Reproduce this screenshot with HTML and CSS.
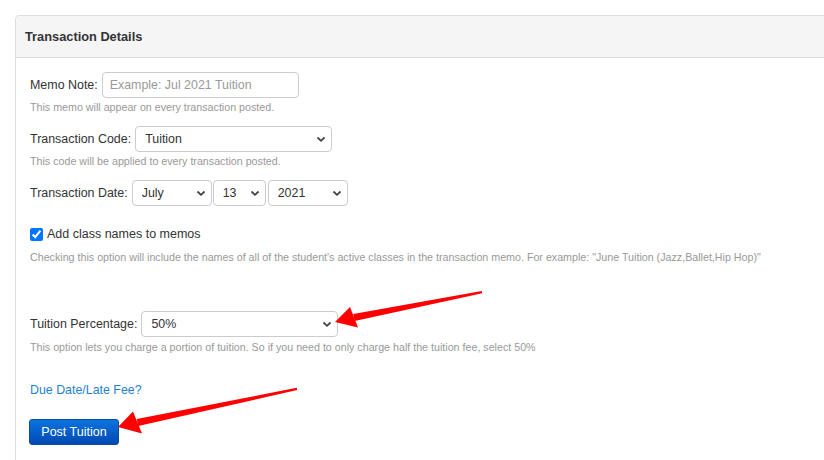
FILE: index.html
```html
<!DOCTYPE html>
<html>
<head>
<meta charset="utf-8">
<link rel="stylesheet" href="styles.css">
</head>
<body>
<div class="panel">
  <div class="panel-heading">Transaction Details</div>
  <div class="panel-body">
    <div class="group">
      <div class="row">
        <label class="label">Memo Note:</label>
        <input class="control input" type="text" placeholder="Example: Jul 2021 Tuition">
      </div>
      <div class="help">This memo will appear on every transaction posted.</div>
    </div>
    <div class="group">
      <div class="row">
        <label class="label">Transaction Code:</label>
        <span class="select w197">
          <select class="control"><option>Tuition</option></select>
          <svg class="chev" width="10" height="7" viewBox="0 0 10 7"><path d="M1.5 1.5 L5 4.8 L8.5 1.5" fill="none" stroke="#444" stroke-width="1.8"/></svg>
        </span>
      </div>
      <div class="help">This code will be applied to every transaction posted.</div>
    </div>
    <div class="group date-group">
      <div class="row">
        <label class="label">Transaction Date:</label>
        <span class="dates">
          <span class="select w80">
            <select class="control"><option>July</option></select>
            <svg class="chev" width="10" height="7" viewBox="0 0 10 7"><path d="M1.5 1.5 L5 4.8 L8.5 1.5" fill="none" stroke="#444" stroke-width="1.8"/></svg>
          </span>
          <span class="select w53">
            <select class="control"><option>13</option></select>
            <svg class="chev" width="10" height="7" viewBox="0 0 10 7"><path d="M1.5 1.5 L5 4.8 L8.5 1.5" fill="none" stroke="#444" stroke-width="1.8"/></svg>
          </span>
          <span class="select w80 gap2">
            <select class="control"><option>2021</option></select>
            <svg class="chev" width="10" height="7" viewBox="0 0 10 7"><path d="M1.5 1.5 L5 4.8 L8.5 1.5" fill="none" stroke="#444" stroke-width="1.8"/></svg>
          </span>
        </span>
      </div>
    </div>
    <div class="group check-group">
      <label class="check-row">
        <input class="checkbox" type="checkbox" checked>
        <span>Add class names to memos</span>
      </label>
      <div class="help check-help">Checking this option will include the names of all of the student's active classes in the transaction memo. For example: "June Tuition (Jazz,Ballet,Hip Hop)"</div>
    </div>
    <div class="group pct-group">
      <div class="row">
        <label class="label">Tuition Percentage:</label>
        <span class="select w197">
          <select class="control"><option>50%</option></select>
          <svg class="chev" width="10" height="7" viewBox="0 0 10 7"><path d="M1.5 1.5 L5 4.8 L8.5 1.5" fill="none" stroke="#444" stroke-width="1.8"/></svg>
        </span>
      </div>
      <div class="help pct-help">This option lets you charge a portion of tuition. So if you need to only charge half the tuition fee, select 50%</div>
    </div>
    <a class="link" href="#">Due Date/Late Fee?</a>
    <div class="actions">
      <button class="btn" type="button">Post Tuition</button>
    </div>
  </div>
</div>
<svg class="arrows" width="824" height="460" viewBox="0 0 824 460">
  <defs>
    <filter id="soft" x="-10%" y="-10%" width="120%" height="120%">
      <feGaussianBlur stdDeviation="0.7"/>
    </filter>
  </defs>
  <g fill="#ff0000" filter="url(#soft)">
    <polygon points="481.8,291 482.2,293.2 354.7,320.9 353.3,314.1"/>
    <polygon points="335,322 350,307 358,327.5"/>
    <polygon points="296.8,387.8 297.2,390 138.2,425.9 136.8,419.1"/>
    <polygon points="118,427 133,411.5 142,433.5"/>
  </g>
</svg>
</body>
</html>
```
FILE: styles.css
```css
html, body {
  margin: 0;
  padding: 0;
  overflow: hidden;
  background: #fff;
}
body {
  font-family: "Liberation Sans", Arial, sans-serif;
  color: #333;
  position: relative;
  width: 824px;
  height: 460px;
}
.panel {
  margin: 15px 0 0 15px;
  width: 880px;
  height: 480px;
  border: 1px solid #dddddd;
  border-top-left-radius: 4px;
  box-sizing: border-box;
}
.panel-heading {
  height: 41px;
  display: flex;
  align-items: center;
  padding-left: 9px;
  background: #f5f5f5;
  border-bottom: 1px solid #dddddd;
  border-top-left-radius: 4px;
  font-weight: bold;
  font-size: 12.8px;
  color: #333;
}
.panel-body {
  padding: 14px 14px 0 14px;
}
.group {
  margin-bottom: 12px;
}
.row {
  display: flex;
  align-items: center;
  gap: 4px;
  height: 26px;
}
.label {
  font-size: 12.45px;
  color: #333;
  white-space: nowrap;
}
.control {
  height: 26px;
  box-sizing: border-box;
  border: 1px solid #cccccc;
  border-radius: 4px;
  background: #fff;
  font-family: "Liberation Sans", Arial, sans-serif;
  font-size: 12.4px;
  color: #333;
  margin: 0;
}
.input {
  width: 197px;
  padding: 0 7px;
  outline: none;
}
.input::placeholder {
  color: #9a9a9a;
}
.select {
  position: relative;
  display: inline-block;
  height: 26px;
}
.select select {
  appearance: none;
  -webkit-appearance: none;
  width: 100%;
  padding: 0 20px 0 9px;
  outline: none;
}
.w197 { width: 197px; }
.w80 { width: 80px; }
.w53 { width: 53px; }
.dates {
  display: flex;
  gap: 1px;
}
.gap2 { margin-left: 1px; }
.chev {
  position: absolute;
  right: 6px;
  top: 10px;
  pointer-events: none;
}
.help {
  font-size: 10.7px;
  line-height: 14px;
  color: #999999;
  margin-top: 2px;
  white-space: nowrap;
}
.date-group {
  margin-bottom: 20px;
}
.check-row {
  display: flex;
  align-items: center;
  gap: 4px;
  height: 16px;
  font-size: 12.5px;
  color: #333;
}
.checkbox {
  width: 13px;
  height: 13px;
  margin: 0;
  accent-color: #0075ff;
}
.check-help {
  margin-top: 8px;
}
.check-group {
  margin-bottom: 47px;
}
.pct-help {
  margin-top: 3px;
}
.pct-group {
  margin-bottom: 28px;
}
.link {
  display: block;
  font-size: 12.4px;
  line-height: 16px;
  color: #1f7fcf;
  text-decoration: none;
}
.actions {
  margin-top: 21px;
  margin-left: -1px;
}
.btn {
  width: 90px;
  height: 26px;
  box-sizing: border-box;
  border: 1px solid #0b4b9e;
  border-radius: 3px;
  background: linear-gradient(#0a74de, #0048b2);
  color: #fff;
  font-family: "Liberation Sans", Arial, sans-serif;
  font-size: 12.5px;
  padding: 0;
  cursor: pointer;
}
.arrows {
  position: absolute;
  top: 0;
  left: 0;
  pointer-events: none;
}
```
